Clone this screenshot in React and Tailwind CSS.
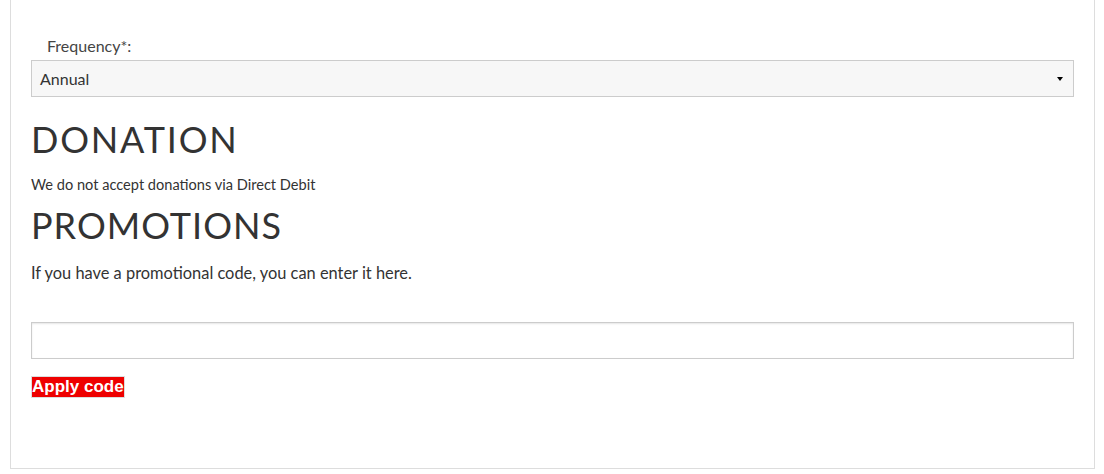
export default function App() {
  const font = { fontFamily: "Lato, 'Open Sans', sans-serif" };
  return (
    <div className="w-[1104px] h-[474px] bg-white overflow-hidden" style={font}>
      <div className="ml-[10px] w-[1085px] h-[469px] border-l border-r border-b border-[#dddddd] pl-[20px] pr-[20px] pt-[34px] text-[#333333]">
        <label className="block pl-[16px] text-[16px] leading-[24px] text-[#444444]">Frequency*:</label>
        <div className="mt-[2px] relative h-[37px] border border-[#cccccc] bg-[#f7f7f7] flex items-center pl-[8px]">
          <span className="text-[16px] text-[#333333]">Annual</span>
          <svg className="absolute right-[10px] top-[16px]" width="6" height="4" viewBox="0 0 6 4">
            <path d="M0 0 L6 0 L3 4 Z" fill="#000" />
          </svg>
        </div>
        <h2 className="mt-[22px] text-[36px] leading-[40px] tracking-[1.8px] font-normal text-[#333333]">DONATION</h2>
        <p className="mt-[16px] text-[14.6px] leading-[20px]">We do not accept donations via Direct Debit</p>
        <h2 className="mt-[10px] text-[36px] leading-[40px] tracking-[1px] font-normal text-[#333333]">PROMOTIONS</h2>
        <p className="mt-[16px] text-[16.4px] leading-[24px]">If you have a promotional code, you can enter it here.</p>
        <input className="mt-[37px] block w-full h-[37px] border border-[#cccccc] shadow-[inset_0_1px_2px_rgba(0,0,0,0.1)] outline-none" />
        <button className="mt-[17px] block bg-[#ee0000] text-white font-bold text-[17px] leading-[20px] px-0 border border-[#dddddd]" style={{ fontFamily: "'Liberation Sans', Arial, sans-serif" }}>Apply code</button>
      </div>
    </div>
  );
}
